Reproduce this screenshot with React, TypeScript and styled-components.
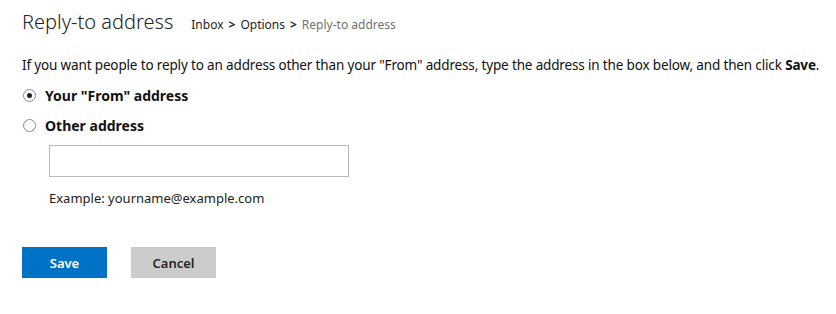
import { useState } from "react";
import styled, { createGlobalStyle } from "styled-components";

const GlobalStyle = createGlobalStyle`
  html, body {
    margin: 0;
    padding: 0;
    background: #ffffff;
  }
  body {
    font-family: "Noto Sans", "Open Sans", sans-serif;
    color: #000000;
  }
`;

const Page = styled.div`
  padding: 8px 22px 0 22px;
  display: flex;
  flex-direction: column;
`;

const Header = styled.div`
  display: flex;
  align-items: baseline;
  gap: 18px;
  height: 34px;
`;

const Title = styled.h1`
  margin: 0;
  font-size: 20px;
  font-weight: 300;
  color: #222222;
`;

const Crumbs = styled.nav`
  display: flex;
  align-items: baseline;
  gap: 5px;
  font-size: 12px;
`;

const Crumb = styled.span<{ current?: boolean }>`
  color: ${(p) => (p.current ? "#707070" : "#222222")};
`;

const Sep = styled.span`
  font-weight: 700;
  color: #222222;
`;

const Intro = styled.p`
  margin: 13px 0 0 0;
  font-size: 13.5px;
  letter-spacing: -0.15px;
  line-height: 20px;
  white-space: nowrap;
  color: #111111;
`;

const Options = styled.div`
  display: flex;
  flex-direction: column;
  gap: 10px;
  margin-top: 10px;
`;

const Option = styled.label`
  display: flex;
  align-items: center;
  gap: 9px;
  height: 20px;
  font-size: 14px;
  font-weight: 700;
  color: #111111;
  cursor: pointer;
`;

const Radio = styled.span<{ checked: boolean }>`
  width: 11px;
  height: 11px;
  margin-left: 1px;
  border: 1px solid #8a8a8a;
  border-radius: 50%;
  background: #ffffff;
  display: flex;
  align-items: center;
  justify-content: center;
  &::after {
    content: "";
    width: 5px;
    height: 5px;
    border-radius: 50%;
    background: ${(p) => (p.checked ? "#222222" : "transparent")};
  }
`;

const Nested = styled.div`
  padding-left: 27px;
  margin-top: 10px;
  display: flex;
  flex-direction: column;
`;

const AddressInput = styled.input`
  box-sizing: border-box;
  width: 300px;
  height: 32px;
  border: 1px solid #b9b9b9;
  padding: 0 8px;
  font-family: inherit;
  font-size: 14px;
  outline: none;
`;

const Hint = styled.div`
  margin-top: 12px;
  font-size: 13px;
  color: #222222;
`;

const Actions = styled.div`
  display: flex;
  gap: 24px;
  margin-top: 40px;
`;

const Button = styled.button<{ primary?: boolean }>`
  width: 85px;
  height: 31px;
  border: none;
  font-family: inherit;
  font-size: 13px;
  font-weight: 600;
  background: ${(p) => (p.primary ? "#0072c6" : "#cccccc")};
  color: ${(p) => (p.primary ? "#ffffff" : "#262626")};
  cursor: pointer;
`;

const App = () => {
  const [choice, setChoice] = useState<"from" | "other">("from");

  return (
    <>
      <GlobalStyle />
      <Page>
        <Header>
          <Title>Reply-to address</Title>
          <Crumbs>
            <Crumb>Inbox</Crumb>
            <Sep>&gt;</Sep>
            <Crumb>Options</Crumb>
            <Sep>&gt;</Sep>
            <Crumb current>Reply-to address</Crumb>
          </Crumbs>
        </Header>
        <Intro>
          If you want people to reply to an address other than your "From"
          address, type the address in the box below, and then click{" "}
          <b>Save</b>.
        </Intro>
        <Options>
          <Option onClick={() => setChoice("from")}>
            <Radio checked={choice === "from"} />
            Your "From" address
          </Option>
          <Option onClick={() => setChoice("other")}>
            <Radio checked={choice === "other"} />
            Other address
          </Option>
        </Options>
        <Nested>
          <AddressInput type="text" />
          <Hint>Example: yourname@example.com</Hint>
        </Nested>
        <Actions>
          <Button primary>Save</Button>
          <Button>Cancel</Button>
        </Actions>
      </Page>
    </>
  );
};

export default App;
